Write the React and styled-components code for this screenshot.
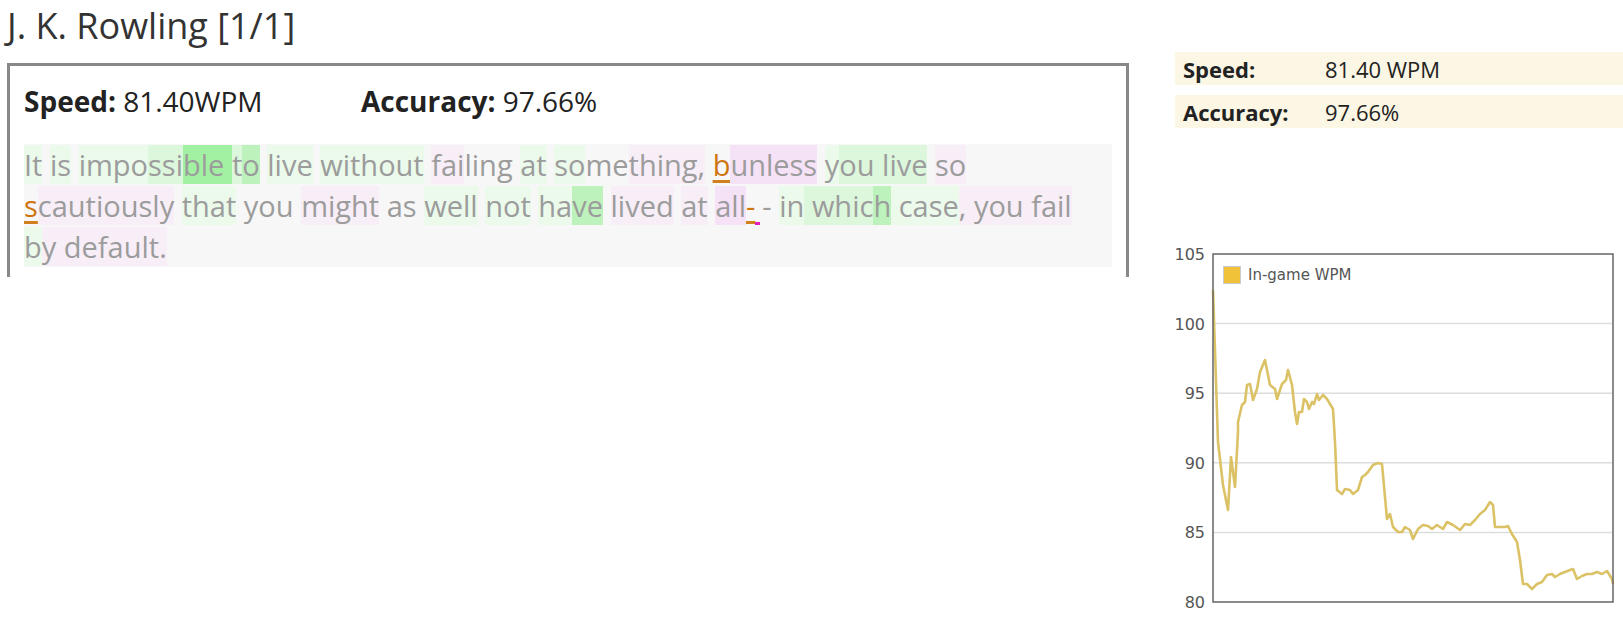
import React from "react";
import styled, { createGlobalStyle } from "styled-components";

const GlobalStyle = createGlobalStyle`
  body {
    margin: 0;
    background: #fff;
    font-family: "Open Sans", "Liberation Sans", sans-serif;
  }
`;

const Page = styled.div`
  display: grid;
  grid-template-columns: 1122px 463px;
  column-gap: 31px;
  padding-left: 7px;
`;

const LeftColumn = styled.div`
  display: flex;
  flex-direction: column;
`;

const Title = styled.h1`
  margin: 5px 0 16px;
  font-size: 36px;
  line-height: 42px;
  font-weight: 400;
  color: #333;
`;

const ResultBox = styled.div`
  border: 3px solid #888;
  border-bottom: none;
  padding: 20px 14px 10px;
`;

const StatsLine = styled.div`
  display: flex;
  font-size: 28px;
  line-height: 31px;
  color: #222;
`;

const Stat = styled.div`
  min-width: 337px;
`;

const Label = styled.b`
  font-weight: 700;
`;

const Passage = styled.div`
  margin-top: 27px;
  background: #f7f7f7;
  font-size: 29px;
  line-height: 41px;
  color: #9c9c9c;
`;

const PassageLine = styled.div`
  white-space: pre;
`;

const Chunk = styled.span`
  background: ${(p) => p.$bg || "transparent"};
`;

const ErrorChar = styled.span`
  color: #cf7410;
  text-decoration: underline;
  text-decoration-color: #d0801c;
  text-decoration-thickness: 3px;
  text-underline-offset: 4px;
`;

const Missed = styled.span`
  display: inline-block;
  width: 5px;
  height: 3px;
  margin-right: 2px;
  background: #e020c0;
  vertical-align: -8px;
`;

const RightColumn = styled.div`
  display: flex;
  flex-direction: column;
  padding-top: 52px;
`;

const SideRow = styled.div`
  display: grid;
  grid-template-columns: 142px 1fr;
  align-items: center;
  height: 33px;
  margin-left: 15px;
  margin-bottom: 10px;
  padding-left: 8px;
  background: #fcf6e4;
  font-size: 22px;
  color: #222;
`;

const Chart = styled.svg`
  display: block;
  margin-top: 104px;
  font-family: "DejaVu Sans", Verdana, sans-serif;
`;

const G1 = "#ebfaeb";
const G2 = "#dcf7dc";
const G3 = "#bdf2bd";
const G4 = "#a2f0a2";
const P1 = "#f7eef7";
const P2 = "#f6e2f6";

const lines = [
  [
    ["It", G1], [" ", null], ["is", G1], [" ", null], ["impo", G1], ["ssi", G2],
    ["ble ", G4], ["t", G2], ["o", G3], [" ", null], ["live", G1], [" ", null],
    ["without", G1], [" ", null], ["fai", P1], ["ling", null], [" ", null], ["at", G1],
    [" ", null], ["so", G1], ["me", null], ["thing,", P1], [" ", null], ["ERR:b", null],
    ["unless", P2], [" ", null], ["y", G1], ["ou", G2], [" ", G2], ["live", G2],
    [" ", null], ["so", P1],
  ],
  [
    ["ERR:s", null], ["cautiously", P1], [" ", null], ["that", G1], [" you", null],
    [" ", null], ["might", P1], [" ", null], ["as", null], [" ", null], ["well", G1],
    [" ", null], ["not", G1], [" ", null], ["ha", G1], ["ve", G3], [" ", null],
    ["lived", P1], [" ", null], ["at", P1], [" ", null], ["all", P2], ["ERR:-", null],
    ["MISS", null], ["- ", null], ["in", G1], [" ", G2], ["whic", G2], ["h", G3],
    [" case", G1], [",", P1], [" you fail", P1],
  ],
  [["b", G1], ["y default.", P1]],
];

const points = [
  [1213, 288], [1218, 440], [1223, 483], [1228, 508], [1231, 455], [1235, 485],
  [1238, 430], [1238, 420], [1242, 403], [1245, 400], [1247, 383], [1250, 382],
  [1253, 398], [1257, 387], [1260, 370], [1265, 358], [1270, 383], [1275, 387],
  [1277, 397], [1282, 382], [1286, 378], [1288, 368], [1292, 383], [1295, 410],
  [1297, 422], [1299, 410], [1302, 410], [1304, 397], [1307, 400], [1309, 407],
  [1312, 400], [1314, 402], [1317, 392], [1319, 398], [1323, 393], [1327, 397],
  [1330, 402], [1333, 407], [1335, 440], [1337, 488], [1342, 492], [1345, 487],
  [1350, 488], [1353, 492], [1358, 488], [1362, 475], [1365, 473], [1368, 470],
  [1373, 463], [1378, 461], [1382, 462], [1387, 517], [1390, 512], [1393, 525],
  [1398, 530], [1402, 530], [1405, 525], [1410, 528], [1413, 537], [1418, 527],
  [1423, 523], [1428, 524], [1432, 527], [1437, 523], [1443, 527], [1447, 520],
  [1453, 523], [1460, 528], [1465, 522], [1470, 523], [1475, 518], [1480, 512],
  [1485, 508], [1490, 500], [1493, 503], [1495, 525], [1500, 525], [1505, 525],
  [1508, 524], [1512, 532], [1517, 540], [1520, 558], [1523, 582], [1527, 582],
  [1532, 587], [1537, 582], [1542, 580], [1547, 573], [1552, 572], [1555, 575],
  [1560, 572], [1565, 570], [1570, 568], [1573, 567], [1577, 577], [1582, 574],
  [1587, 572], [1592, 572], [1597, 570], [1602, 572], [1607, 569], [1612, 577],
  [1613, 582],
];

const yOf = (v) => 12 + (105 - v) * 13.92;

function WpmChart() {
  const path = points.map(([x, y]) => `${x - 1160},${y - 240}`).join(" ");
  const ticks = [105, 100, 95, 90, 85, 80];
  return (
    <Chart width="463" height="375" viewBox="0 0 463 375">
      {ticks.slice(1, 5).map((t) => (
        <line key={t} x1="53" x2="453" y1={yOf(t)} y2={yOf(t)} stroke="#ddd" strokeWidth="1.5" />
      ))}
      {ticks.map((t) => (
        <text key={t} x="45" y={yOf(t) + 6} textAnchor="end" fontSize="16" fill="#555">
          {t}
        </text>
      ))}
      <polyline points={path} fill="none" stroke="#dcc266" strokeWidth="2.6" strokeLinejoin="round" />
      <rect x="53" y="12" width="400" height="348" fill="none" stroke="#666" strokeWidth="1.5" />
      <rect x="63.5" y="24.5" width="17" height="17" fill="#efc23a" stroke="#ccc" />
      <text x="88" y="38" fontSize="15" fill="#555">In-game WPM</text>
    </Chart>
  );
}

function renderChunk([text, bg], i) {
  if (text === "MISS") return <Missed key={i} />;
  if (text.startsWith("ERR:")) return <ErrorChar key={i}>{text.slice(4)}</ErrorChar>;
  return (
    <Chunk key={i} $bg={bg}>
      {text}
    </Chunk>
  );
}

export default function App() {
  return (
    <>
      <GlobalStyle />
      <Page>
        <LeftColumn>
          <Title>J. K. Rowling [1/1]</Title>
          <ResultBox>
            <StatsLine>
              <Stat>
                <Label>Speed:</Label> 81.40WPM
              </Stat>
              <Stat>
                <Label>Accuracy:</Label> 97.66%
              </Stat>
            </StatsLine>
            <Passage>
              {lines.map((line, li) => (
                <PassageLine key={li}>{line.map(renderChunk)}</PassageLine>
              ))}
            </Passage>
          </ResultBox>
        </LeftColumn>
        <RightColumn>
          <SideRow>
            <Label>Speed:</Label>
            <span>81.40 WPM</span>
          </SideRow>
          <SideRow>
            <Label>Accuracy:</Label>
            <span>97.66%</span>
          </SideRow>
          <WpmChart />
        </RightColumn>
      </Page>
    </>
  );
}
